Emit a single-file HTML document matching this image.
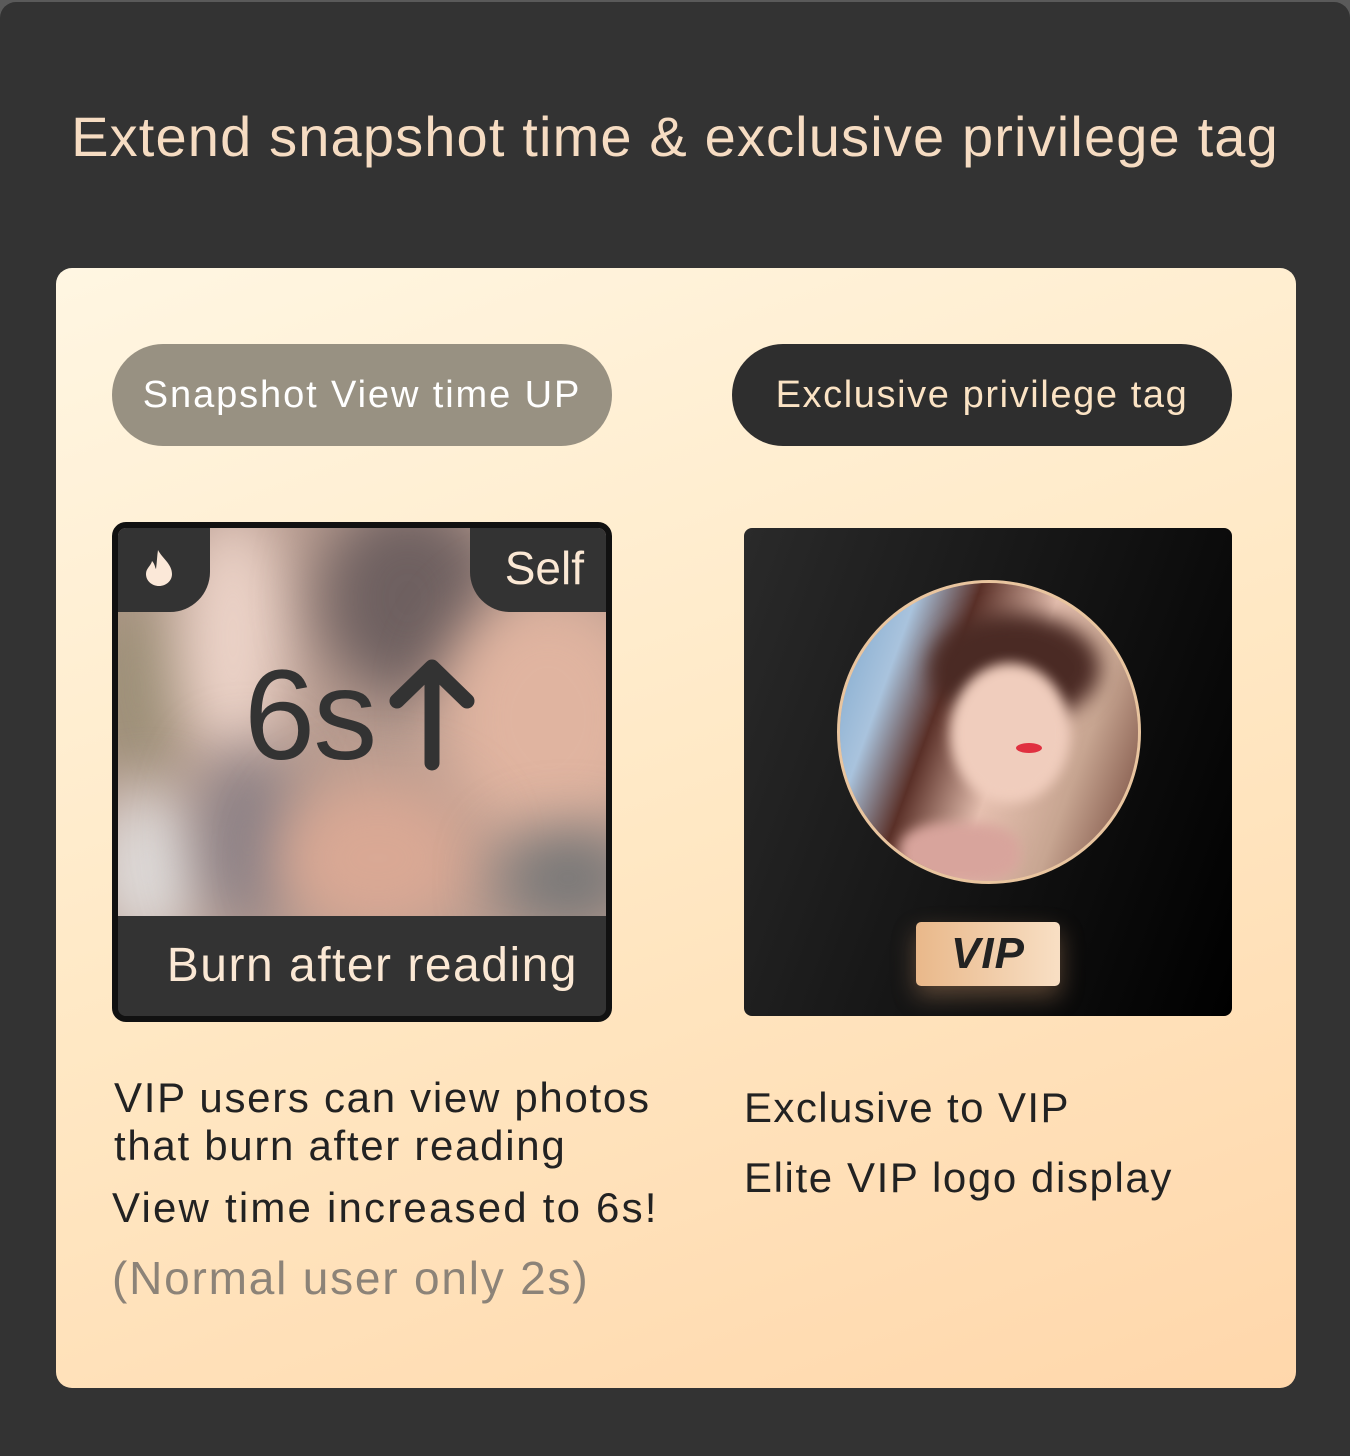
<!DOCTYPE html>
<html><head><meta charset="utf-8"><style>
*{margin:0;padding:0;box-sizing:border-box}
html,body{width:1350px;height:1456px;background:#5a5a5a;overflow:hidden;font-family:"Liberation Sans",sans-serif}
.wrap{position:absolute;left:0;top:2px;width:1350px;height:1454px;background:#333;border-radius:16px 16px 0 0}
.title{position:absolute;left:0;top:102px;width:1350px;text-align:center;color:#f6dcc2;font-size:56px;letter-spacing:1.15px}
.card{position:absolute;left:56px;top:266px;width:1240px;height:1120px;border-radius:16px;background:linear-gradient(160deg,#fff6e2 0%,#ffe8c4 50%,#ffd7ab 100%)}
.pill{position:absolute;top:76px;width:500px;height:102px;border-radius:51px;font-size:38px;line-height:102px;text-align:center}
.p1{left:56px;background:#989182;color:#fff;letter-spacing:1.9px}
.p2{left:676px;background:#2e2e2e;color:#fbe3c4;letter-spacing:1.6px}
.lbox{position:absolute;left:56px;top:254px;width:500px;height:500px;border:6px solid #111;border-radius:14px;overflow:hidden;background:#333}
.blur{position:absolute;left:0;top:0;width:488px;height:388px;overflow:hidden;background:#b89c90}
.blob{position:absolute;border-radius:50%;filter:blur(30px)}
.badge{position:absolute;top:0;background:#333;height:84px}
.bl{left:0;width:92px;border-radius:0 0 40px 0}
.br{right:0;width:136px;border-radius:0 0 0 40px;color:#fbe8d4;font-size:46px;line-height:80px;text-align:right;padding-right:22px}
.big{position:absolute;left:126px;top:114px;font-size:128px;color:#333;letter-spacing:-2px}
.bottom{position:absolute;left:0;top:388px;width:488px;height:100px;background:#333;color:#fbe8d4;font-size:48px;line-height:100px;text-align:right;padding-right:28px;letter-spacing:1.5px}
.rbox{position:absolute;left:688px;top:260px;width:488px;height:488px;border-radius:8px;background:linear-gradient(110deg,#2a2a2a 0%,#151515 50%,#000 100%);overflow:hidden}
.circ{position:absolute;left:93px;top:52px;width:304px;height:304px;border-radius:50%;border:3px solid #e9c59f;overflow:hidden;background:#c9a793}
.vip{position:absolute;left:172px;top:394px;width:144px;height:64px;border-radius:5px;background:linear-gradient(90deg,#e9b88a,#f8dfc4);box-shadow:0 10px 24px rgba(230,170,120,.35);text-align:center;font:italic 900 44px/64px "Liberation Sans",sans-serif;color:#222;letter-spacing:1px}
.t{position:absolute;font-size:42px;color:#222;line-height:48px}
</style></head><body>
<div class="wrap">
<div class="title">Extend snapshot time &amp; exclusive privilege tag</div>
<div class="card">
<div class="pill p1">Snapshot View time UP</div>
<div class="pill p2">Exclusive privilege tag</div>
<div class="lbox">
 <div class="blur">
  <div class="blob" style="left:-40px;top:60px;width:120px;height:200px;background:#9d9078"></div>
  <div class="blob" style="left:60px;top:-20px;width:110px;height:260px;background:#ecd3c8"></div>
  <div class="blob" style="left:200px;top:-30px;width:180px;height:200px;background:#6e6060"></div>
  <div class="blob" style="left:320px;top:60px;width:220px;height:260px;background:#e0b4a0"></div>
  <div class="blob" style="left:-30px;top:260px;width:120px;height:160px;background:#dedad8"></div>
  <div class="blob" style="left:80px;top:220px;width:100px;height:180px;background:#8a8086"></div>
  <div class="blob" style="left:160px;top:250px;width:200px;height:160px;background:#d9a894"></div>
  <div class="blob" style="left:380px;top:300px;width:140px;height:100px;background:#777"></div>
 </div>
 <div class="badge bl"><svg width="92" height="84" viewBox="0 0 92 84"><path d="M40 22 C44 30 54 36 54 46 C54 53 48 58 41 58 C34 58 28 53 28 46 C28 40 33 38 34 33 C37 36 37 40 38 41 C39 34 39 28 40 22Z" fill="#fbe8d8"/></svg></div>
 <div class="badge br">Self</div>
 <div class="big">6s<svg width="90" height="120" viewBox="0 0 90 120" style="vertical-align:-14px;margin-left:12px"><path d="M45 110 V14 M10 48 L45 14 L80 48" stroke="#333" stroke-width="15" fill="none" stroke-linecap="round" stroke-linejoin="round"/></svg></div>
 <div class="bottom">Burn after reading</div>
</div>
<div class="rbox">
 <div class="circ">
  <div style="position:absolute;left:0;top:0;width:100%;height:100%;background:linear-gradient(110deg,#7aa6cc 0%,#a9c3dd 20%,#5a3028 35%,#e6c0b0 55%,#c7a591 75%,#6b3f33 100%)"></div>
  <div style="position:absolute;left:90px;top:30px;width:170px;height:110px;border-radius:50%;background:#4a2a24;filter:blur(10px)"></div>
  <div style="position:absolute;left:110px;top:80px;width:120px;height:140px;border-radius:50%;background:#f0cdbd;filter:blur(6px)"></div>
  <div style="position:absolute;left:176px;top:160px;width:26px;height:10px;border-radius:50%;background:#e03040"></div>
  <div style="position:absolute;left:60px;top:240px;width:120px;height:60px;border-radius:40%;background:#d8a49c;filter:blur(6px)"></div>
 </div>
 <div class="vip">VIP</div>
</div>
<div class="t" style="left:58px;top:806px;letter-spacing:1.7px">VIP users can view photos<br>that burn after reading</div>
<div class="t" style="left:56px;top:916px;letter-spacing:2.2px">View time increased to 6s!</div>
<div class="t" style="left:56px;top:986px;font-size:46px;color:#8c8378;letter-spacing:1.8px">(Normal user only 2s)</div>
<div class="t" style="left:688px;top:816px;letter-spacing:1.4px">Exclusive to VIP</div>
<div class="t" style="left:688px;top:886px;letter-spacing:1.6px">Elite VIP logo display</div>
</div>
</div>
</body></html>
